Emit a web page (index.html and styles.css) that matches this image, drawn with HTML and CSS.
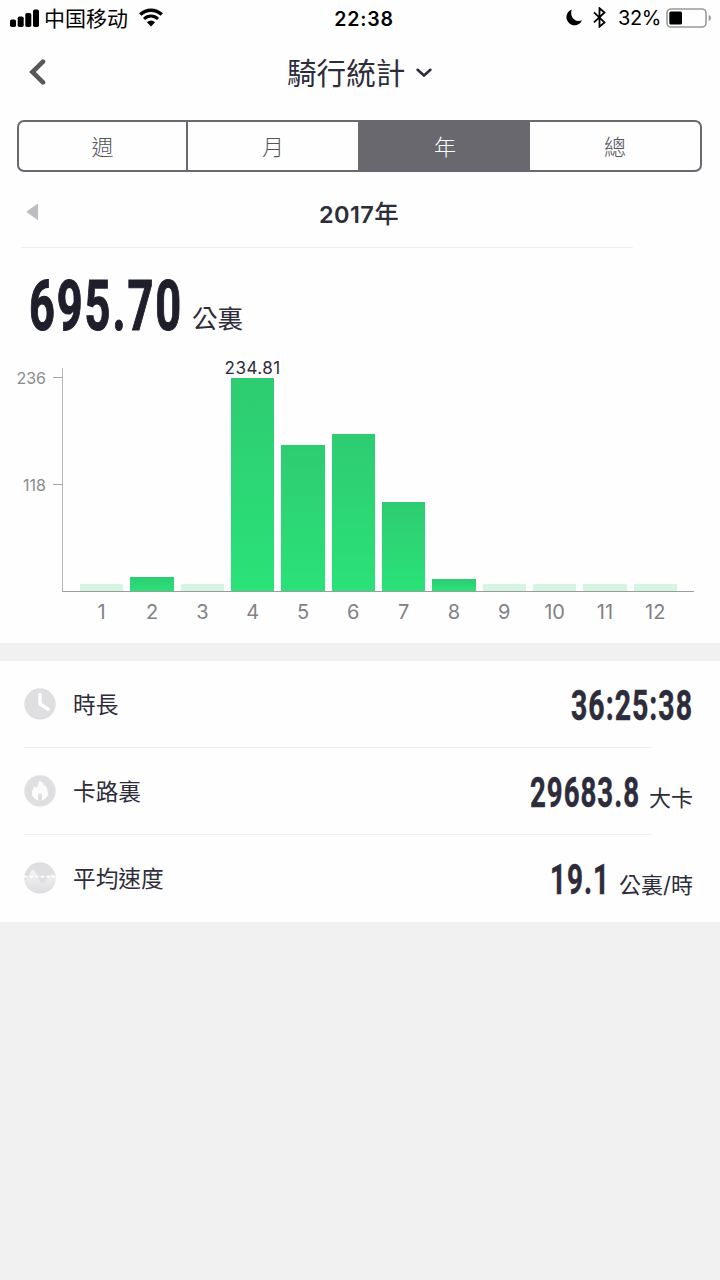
FILE: index.html
```html
<!DOCTYPE html>
<html lang="zh-Hant">
<head>
    <meta charset="UTF-8">
    <meta name="viewport" content="width=device-width, initial-scale=1.0">
    <title>騎行統計</title>
    <link rel="stylesheet" href="styles.css">
</head>
<body>
    <div class="status-bar">
        <div class="status-left">
            <svg class="signal" width="29" height="18" viewBox="0 0 29 18">
                <rect x="0" y="10.5" width="6" height="7.5" rx="1.8"/>
                <rect x="7.7" y="7.5" width="6" height="10.5" rx="1.8"/>
                <rect x="15.3" y="4" width="6" height="14" rx="1.8"/>
                <rect x="23" y="0.5" width="6" height="17.5" rx="1.8"/>
            </svg>
            <span class="carrier" lang="zh-Hans">中国移动</span>
            <svg class="wifi" width="26" height="19" viewBox="0 0 26 19">
                <path d="M2.2 6.6C8.5.8 17.5.8 23.8 6.6" fill="none" stroke="#000" stroke-width="3.4"/>
                <path d="M6 11C10.2 7.1 15.8 7.1 20 11" fill="none" stroke="#000" stroke-width="3"/>
                <path d="M8.9 14.3Q13 10.8 17.1 14.3L13 18.4Z"/>
            </svg>
        </div>
        <span class="clock">22:38</span>
        <div class="status-right">
            <svg class="moon" width="17" height="17" viewBox="0 0 17 17">
                <path d="M5.7.6A8.1 8.1 0 1 0 16 11.3C10 13.8 3.2 8.5 5.7.6Z"/>
            </svg>
            <svg class="bluetooth" width="13" height="21" viewBox="0 0 13 21">
                <path d="M1 5.4L11.5 15.4L6.5 19.6V1.2L11.5 5.5L1 15.4" fill="none" stroke="#000" stroke-width="1.8"/>
            </svg>
            <span class="percent">32%</span>
            <svg class="battery" width="46" height="20" viewBox="0 0 46 20">
                <rect x="1" y="1" width="39" height="18" rx="4" fill="none" stroke="#999" stroke-width="1.6"/>
                <rect x="3.3" y="3.6" width="12.7" height="12.8" rx="1.5"/>
                <path d="M42.7 6.8Q45 8 45 10T42.7 13.2Z" fill="#999"/>
            </svg>
        </div>
    </div>

    <div class="nav">
        <svg class="back" width="18" height="26" viewBox="0 0 18 26">
            <path d="M15 2.6L4.4 13L15 23.4" fill="none" stroke="#58585b" stroke-width="4.6" stroke-linecap="round"/>
        </svg>
        <h1>騎行統計</h1>
        <svg class="arrow" width="16" height="10" viewBox="0 0 16 10">
            <path d="M1.6 1.8L8 7.4L14.4 1.8" fill="none" stroke="#2d2c3a" stroke-width="2.6" stroke-linecap="round"/>
        </svg>
    </div>

    <div class="tabs">
        <div class="tab">週</div>
        <div class="tab">月</div>
        <div class="tab active">年</div>
        <div class="tab">總</div>
    </div>

    <div class="year">
        <svg class="prev" width="13" height="18" viewBox="0 0 13 18">
            <path d="M11.6 1.2V16.4L1 8.8Z" fill="#bdbdc1" stroke="#bdbdc1" stroke-linejoin="round"/>
        </svg>
        <span class="year-name">2017<span class="year-unit">年</span></span>
    </div>

    <div class="total">
        <svg class="number" width="156" height="68">
            <text class="big" x="1" y="56" textLength="154" lengthAdjust="spacingAndGlyphs">695.70</text>
        </svg>
        <span>公裏</span>
    </div>

    <div class="chart">
        <div class="y-axis">
            <div class="tick">236</div>
            <div class="tick">118</div>
        </div>
        <div class="plot">
            <div class="bar empty"></div>
            <div class="bar" style="height: 14px"></div>
            <div class="bar empty"></div>
            <div class="bar" style="height: 213px"><span class="value">234.81</span></div>
            <div class="bar" style="height: 146px"></div>
            <div class="bar" style="height: 157px"></div>
            <div class="bar" style="height: 89px"></div>
            <div class="bar" style="height: 12px"></div>
            <div class="bar empty"></div>
            <div class="bar empty"></div>
            <div class="bar empty"></div>
            <div class="bar empty"></div>
        </div>
    </div>
    <div class="months">
        <span>1</span><span>2</span><span>3</span><span>4</span><span>5</span><span>6</span>
        <span>7</span><span>8</span><span>9</span><span>10</span><span>11</span><span>12</span>
    </div>

    <div class="list">
        <div class="row">
            <svg class="icon" width="32" height="32" viewBox="0 0 32 32">
                <circle cx="16" cy="16" r="15.7" fill="#dfdfe1"/>
                <path d="M16 6.5V16L24 21" fill="none" stroke="#fff" stroke-width="3.4" stroke-linecap="round" stroke-linejoin="round"/>
            </svg>
            <span class="label">時長</span>
            <svg class="number" width="124" height="44">
                <text class="small" x="2" y="37" textLength="122" lengthAdjust="spacingAndGlyphs">36:25:38</text>
            </svg>
        </div>
        <div class="row">
            <svg class="icon" width="32" height="32" viewBox="0 0 32 32">
                <circle cx="16" cy="16" r="15.7" fill="#dfdfe1"/>
                <path d="M15 5.8C18 7 20 9 20.4 11L21.3 10C23 13 24 15.5 24 18.2C24 22.5 20.5 25.3 16 25.3S8 22.5 8 18.2C8 15 9.5 13.2 10.5 11L12.3 13C14 11 15 8.5 15 5.8Z" fill="#fbfbfb"/>
                <path d="M14 25V20.6Q14 18 16 18T18 20.6V25Z" fill="#dfdfe1"/>
            </svg>
            <span class="label">卡路裏</span>
            <svg class="number" width="112" height="44">
                <text class="small" x="1" y="37" textLength="110" lengthAdjust="spacingAndGlyphs">29683.8</text>
            </svg>
            <span class="unit">大卡</span>
        </div>
        <div class="row">
            <svg class="icon" width="32" height="32" viewBox="0 0 32 32">
                <defs>
                    <linearGradient id="wave" x1="0" y1="0" x2="0" y2="1">
                        <stop offset="0" stop-color="#f5f5f6"/>
                        <stop offset="1" stop-color="#dfdfe1"/>
                    </linearGradient>
                    <clipPath id="disc"><circle cx="16" cy="16" r="15.7"/></clipPath>
                </defs>
                <circle cx="16" cy="16" r="15.7" fill="#dfdfe1"/>
                <path d="M0 19C4 19 6 8 9 8S14 20 18 21S25 12 28 12L32 14V29H0Z" fill="url(#wave)" clip-path="url(#disc)"/>
                <path d="M0 14.6H32" stroke="#fff" stroke-width="1.8" stroke-dasharray="3.4 2.2"/>
            </svg>
            <span class="label">平均速度</span>
            <svg class="number" width="61" height="44">
                <text class="small" x="0" y="37" textLength="60" lengthAdjust="spacingAndGlyphs">19.1</text>
            </svg>
            <span class="unit">公裏/時</span>
        </div>
    </div>
</body>
</html>
```
FILE: styles.css
```css
* {
    box-sizing: border-box;
}
body {
    margin: 0;
    min-height: 1280px;
    font-family: Inter, "Noto Sans CJK TC", sans-serif;
    background-color: #fefefe;
    color: #2d2c3a;
    display: flex;
    flex-direction: column;
}
svg {
    display: block;
    flex-shrink: 0;
}
.status-bar {
    display: grid;
    grid-template-columns: 1fr auto 1fr;
    align-items: center;
    height: 37px;
    padding: 0 8px 0 10px;
    color: #000;
    font-size: 20px;
}
.status-left,
.status-right {
    display: flex;
    align-items: center;
}
.status-left {
    margin-top: -2px;
}
.status-right {
    justify-content: flex-end;
    margin-top: -2px;
}
.signal {
    margin-right: 5px;
}
.carrier {
    margin-top: -2px;
    font-family: "Noto Sans CJK SC", sans-serif;
    font-size: 21px;
    font-weight: 400;
    line-height: 36px;
}
.wifi {
    margin-left: 10px;
}
.clock {
    margin-left: 6px;
    font-size: 19.5px;
    font-weight: 600;
    letter-spacing: 0.8px;
}
.bluetooth {
    margin: 0 12px 0 10px;
}
.percent {
    margin-right: 5px;
    letter-spacing: -0.4px;
}
.nav {
    display: flex;
    align-items: center;
    height: 72px;
    padding-left: 28px;
}
.back {
    margin-top: -3px;
}
h1 {
    margin: 0 11px 0 241px;
    font-size: 29.6px;
    font-weight: 400;
    line-height: 44px;
}
.tabs {
    display: flex;
    margin: 11px 18px 0 17px;
    height: 52px;
    border: 2px solid #69686e;
    border-radius: 7px;
    overflow: hidden;
}
.tab {
    flex: 1;
    display: flex;
    align-items: center;
    justify-content: center;
    padding-bottom: 3px;
    font-size: 22px;
    font-weight: 300;
    color: #55545a;
}
.tab:first-child {
    flex: 0 0 167px;
}
.tab + .tab {
    border-left: 2px solid #69686e;
}
.tab.active {
    background-color: #69686e;
    color: #fff;
}
.tab.active + .tab {
    border-left: none;
}
.year {
    display: flex;
    align-items: center;
    margin: 0 87px 0 21px;
    height: 76px;
    padding-left: 5px;
    border-bottom: 1px solid #f1f1f1;
}
.prev {
    margin-top: 5px;
}
.year-name {
    margin: 5px 0 0 280px;
    font-size: 23.5px;
    font-weight: 600;
    letter-spacing: 0.4px;
}
.year-unit {
    font-size: 24.5px;
    font-weight: 500;
}
.total {
    display: flex;
    align-items: flex-end;
    height: 86px;
    padding-left: 28px;
}
.total span {
    margin-left: 8px;
    margin-bottom: -1px;
    font-size: 25.5px;
    font-weight: 400;
    line-height: 32px;
}
.number {
    overflow: visible;
}
/* condensed bold figures */
.big {
    font-family: Roboto, sans-serif;
    font-size: 70px;
    font-weight: 700;
    letter-spacing: 3px;
    fill: #1f1e2b;
    stroke: #1f1e2b;
    stroke-width: 1.2px;
}
.total .number {
    margin-bottom: -8px;
}
.small {
    font-family: Roboto, sans-serif;
    font-size: 42.5px;
    font-weight: 700;
    letter-spacing: 1.5px;
    fill: #2d2c3a;
    stroke: #2d2c3a;
    stroke-width: 0.5px;
}
.chart {
    display: flex;
    margin: 34px 26px 0 0;
    height: 224px;
}
.y-axis {
    display: flex;
    flex-direction: column;
    gap: 88px;
    width: 62px;
}
.tick {
    display: flex;
    align-items: center;
    justify-content: flex-end;
    gap: 7px;
    height: 19px;
    font-size: 16px;
    color: #8b8a8f;
}
.tick::after {
    content: "";
    width: 9px;
    height: 1px;
    background-color: #a5a5a8;
}
.plot {
    flex: 1;
    display: flex;
    align-items: flex-end;
    gap: 7px;
    padding: 0 17px;
    border-left: 1px solid #b5b5b8;
    border-bottom: 1px solid #9c9c9f;
}
.bar {
    position: relative;
    flex: 1;
    background: linear-gradient(#2ecc71, #2ae278);
}
.bar.empty {
    height: 7px;
    background: #d5f4e1;
}
/* label sits over the tallest bar */
.value {
    position: absolute;
    left: 50%;
    bottom: 100%;
    transform: translateX(-50%);
    font-size: 17px;
    line-height: 19px;
    letter-spacing: 0.5px;
}
.months {
    display: flex;
    gap: 7px;
    height: 51px;
    padding: 8px 43px 0 80px;
    font-size: 20px;
    color: #828187;
}
.months span {
    flex: 1;
    text-align: center;
}
.list {
    flex: 1;
    border-top: 18px solid #f1f1f1;
    background-color: #f1f1f1;
}
.row {
    display: flex;
    align-items: center;
    height: 87px;
    padding: 0 27px 0 24px;
    background: linear-gradient(#f1f1f1, #f1f1f1) 24px 100% / 628px 1px no-repeat #fefefe;
}
.row:last-child {
    background: #fefefe;
}
.icon {
    margin-top: -1px;
}
.label {
    margin-left: 17px;
    margin-right: auto;
    font-size: 22.7px;
    line-height: 34px;
}
.unit {
    margin: 9px 0 0 8px;
    font-size: 22px;
    font-weight: 400;
}
```
